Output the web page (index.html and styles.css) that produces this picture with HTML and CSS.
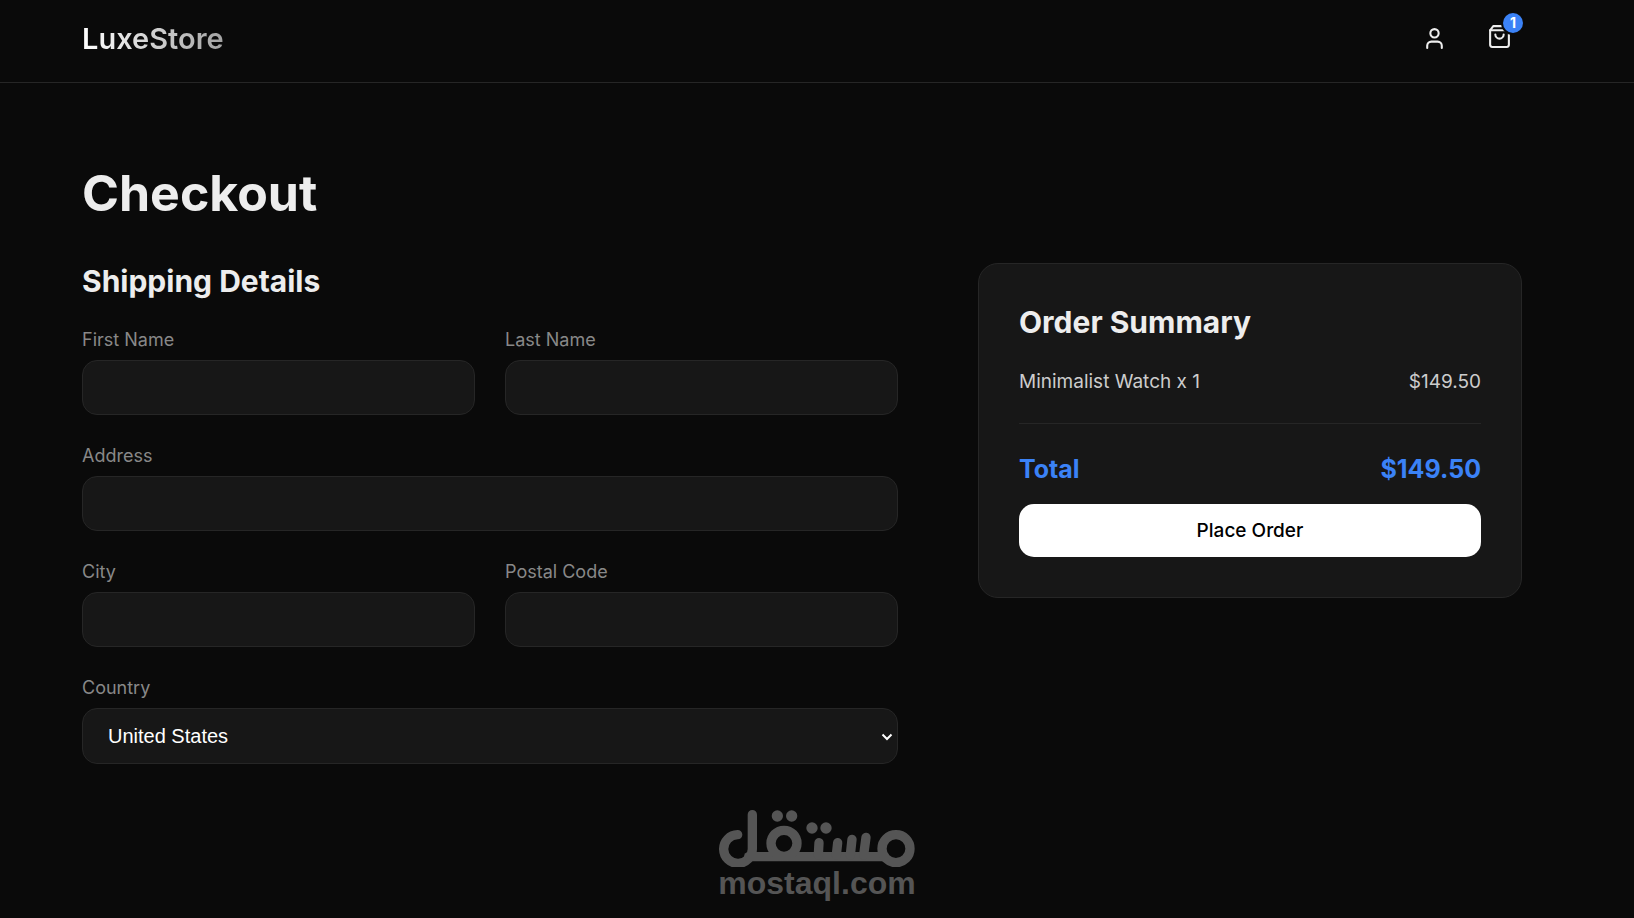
FILE: index.html
```html
<!DOCTYPE html>
<html lang="en">
<head>
    <meta charset="UTF-8">
    <meta name="viewport" content="width=device-width, initial-scale=1.0">
    <title>Checkout - LuxeStore</title>
    <link rel="stylesheet" href="styles.css">
</head>
<body>
    <header class="navbar">
        <div class="container nav-content">
            <a href="#" class="logo">LuxeStore</a>
            <div class="nav-actions">
                <button class="icon-btn" type="button" aria-label="Account">
                    <svg viewBox="0 0 24 24">
                        <path d="M19 21v-2a4 4 0 0 0-4-4H9a4 4 0 0 0-4 4v2"/>
                        <circle cx="12" cy="7" r="4"/>
                    </svg>
                </button>
                <button class="icon-btn cart-btn" type="button" aria-label="Cart">
                    <svg viewBox="0 0 24 24">
                        <path d="M6 2 3 6v14a2 2 0 0 0 2 2h14a2 2 0 0 0 2-2V6l-3-4Z"/>
                        <path d="M3 6h18"/>
                        <path d="M16 10a4 4 0 0 1-8 0"/>
                    </svg>
                    <span class="cart-badge">1</span>
                </button>
            </div>
        </div>
    </header>

    <main class="container checkout">
        <h1>Checkout</h1>
        <form class="checkout-grid">
            <section>
                <h2>Shipping Details</h2>
                <div class="form-grid">
                    <div class="form-group">
                        <label for="firstName">First Name</label>
                        <input type="text" id="firstName">
                    </div>
                    <div class="form-group">
                        <label for="lastName">Last Name</label>
                        <input type="text" id="lastName">
                    </div>
                    <div class="form-group full">
                        <label for="address">Address</label>
                        <input type="text" id="address">
                    </div>
                    <div class="form-group">
                        <label for="city">City</label>
                        <input type="text" id="city">
                    </div>
                    <div class="form-group">
                        <label for="postal">Postal Code</label>
                        <input type="text" id="postal">
                    </div>
                    <div class="form-group full">
                        <label for="country">Country</label>
                        <div class="select-wrap">
                            <select id="country">
                                <option>United States</option>
                            </select>
                            <svg class="select-arrow" viewBox="0 0 12 8">
                                <path d="M1.5 1.5 6 6l4.500-4.500"/>
                            </svg>
                        </div>
                    </div>
                </div>
            </section>

            <aside class="summary">
                <h2>Order Summary</h2>
                <div class="summary-item">
                    <span>Minimalist Watch x 1</span>
                    <span>$149.50</span>
                </div>
                <div class="summary-total">
                    <span>Total</span>
                    <span>$149.50</span>
                </div>
                <button class="btn-primary" type="submit">Place Order</button>
            </aside>
        </form>
    </main>

    <div class="watermark">
        <svg viewBox="57 60 588 171" role="img" aria-label="مستقل">
            <g fill="none" stroke="#555" stroke-width="28" stroke-linecap="round">
                <path d="M113 134A43 43 0 1 0 157 176V74"/>
                <path d="M146 200H552"/>
                <circle cx="252" cy="160" r="39"/>
                <circle cx="588" cy="176" r="42"/>
                <path d="M357 158 355 195M413 158 409 195M456 148 451 195M498 142 491 195"/>
            </g>
            <g fill="#555">
                <circle cx="232" cy="78" r="17"/>
                <circle cx="275" cy="78" r="17"/>
                <circle cx="336" cy="114" r="17"/>
                <circle cx="378" cy="114" r="17"/>
            </g>
        </svg>
        <span>mostaql.com</span>
    </div>
</body>
</html>
```
FILE: styles.css
```css
* {
    margin: 0;
    padding: 0;
    box-sizing: border-box;
}

body {
    font-family: 'Inter', sans-serif;
    font-size: 20px;
    background: #0a0a0a;
    color: #ededed;
    padding-bottom: 16px;
}

.container {
    padding: 0 112px 0 82px;
}

.navbar {
    border-bottom: 1px solid #262626;
}

.nav-content {
    display: flex;
    justify-content: space-between;
    align-items: flex-start;
    padding-top: 14px;
    padding-bottom: 19px;
}

.logo {
    font-size: 29px;
    font-weight: 600;
    line-height: 49px;
    text-decoration: none;
    background: linear-gradient(to right, #fff, #a3a3a3);
    -webkit-background-clip: text;
    background-clip: text;
    color: transparent;
}

.nav-actions {
    display: flex;
    gap: 20px;
    align-items: center;
}

.icon-btn {
    position: relative;
    display: flex;
    padding: 10px;
    background: none;
    border: none;
    color: #ededed;
    cursor: pointer;
}

.icon-btn svg {
    width: 25px;
    height: 25px;
    fill: none;
    stroke: currentColor;
    stroke-width: 2;
    stroke-linecap: round;
    stroke-linejoin: round;
}

.cart-btn {
    padding-bottom: 14px;
}

.cart-badge {
    position: absolute;
    top: -1px;
    right: -1px;
    width: 20px;
    height: 20px;
    border-radius: 50%;
    background: #3b82f6;
    box-shadow: 0 0 0 2px #0a0a0a;
    color: #fff;
    font: 700 14px/20px 'Inter', sans-serif;
    text-align: center;
}

.checkout {
    padding-top: 80px;
}

h1 {
    font-size: 50px;
    line-height: 60px;
    margin-bottom: 40px;
}

h2 {
    font-size: 30px;
    line-height: 36px;
    margin-bottom: 30px;
}

.checkout-grid {
    display: grid;
    grid-template-columns: 3fr 2fr;
    gap: 80px;
    align-items: start;
}

.form-grid {
    display: grid;
    grid-template-columns: 1fr 1fr;
    gap: 30px;
}

.full {
    grid-column: 1 / -1;
}

.form-group label {
    display: block;
    font-size: 18px;
    line-height: 21px;
    margin-bottom: 10px;
    color: #888;
}

.form-group input,
.form-group select {
    display: block;
    width: 100%;
    height: 55px;
    padding: 0 25px;
    background: #171717;
    border: 1px solid #262626;
    border-radius: 15px;
    color: #fff;
    font-family: 'Liberation Sans', Arial, sans-serif;
    font-size: 20px;
}

.form-group select {
    height: 56px;
    appearance: none;
}

.select-wrap {
    position: relative;
}

.select-arrow {
    position: absolute;
    top: 25px;
    right: 5px;
    width: 12px;
    height: 8px;
    fill: none;
    stroke: #fff;
    stroke-width: 2;
    pointer-events: none;
}

.summary {
    padding: 40px;
    background: #171717;
    border: 1px solid #262626;
    border-radius: 20px;
}

.summary-item,
.summary-total {
    display: flex;
    justify-content: space-between;
}

.summary-item {
    font-size: 19px;
    line-height: 23px;
    margin-bottom: 30px;
    color: #ccc;
}

.summary-total {
    padding-top: 30px;
    margin-bottom: 20px;
    border-top: 1px solid #262626;
    font-size: 25px;
    font-weight: 700;
    line-height: 30px;
    color: #3b82f6;
}

.btn-primary {
    width: 100%;
    height: 53px;
    background: #fff;
    border: none;
    border-radius: 15px;
    color: #000;
    font-family: inherit;
    font-size: 19px;
    font-weight: 500;
    cursor: pointer;
}

.watermark {
    display: flex;
    flex-direction: column;
    align-items: center;
    margin-top: 46px;
    color: #555;
    font-family: 'Liberation Sans', Arial, sans-serif;
    font-size: 32px;
    font-weight: 700;
    line-height: 32px;
}

.watermark svg {
    width: 196px;
    height: 57px;
}
```
